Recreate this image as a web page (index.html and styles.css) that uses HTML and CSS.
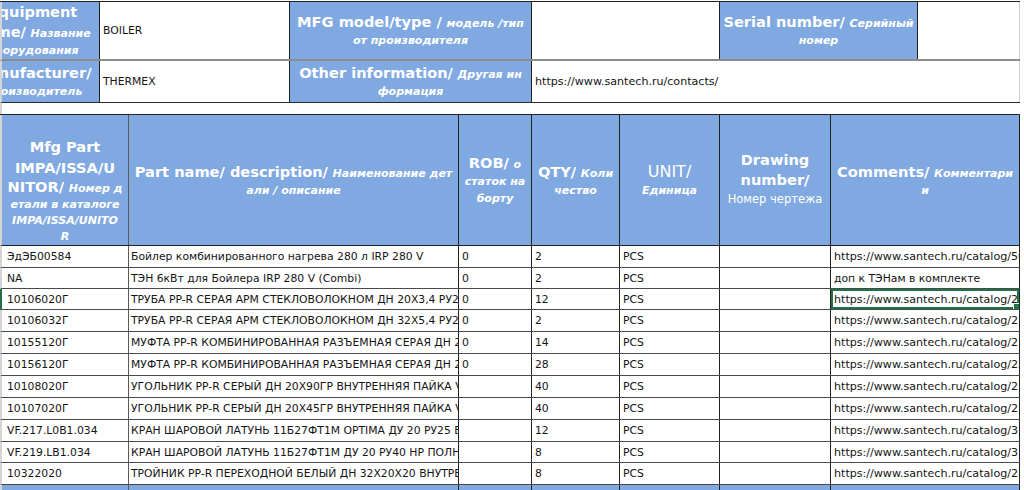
FILE: index.html
```html
<!DOCTYPE html>
<html lang="ru">
<head>
<meta charset="utf-8">
<title>Equipment spare parts</title>
<link rel="stylesheet" href="styles.css">
</head>
<body>
<div class="sheet">
  <div class="info">
    <div class="irow irow1">
      <div class="cell blue clipl"><div class="shift">
        <div class="ln"><span class="b">Equipment</span></div>
        <div class="ln"><span class="b">name/</span> <span class="i">Название</span></div>
        <div class="ln it l17"><span class="i">оборудования</span></div>
      </div></div>
      <div class="cell val">BOILER</div>
      <div class="cell blue"><div>
        <div class="ln l19"><span class="b">MFG model/type /</span> <span class="i">модель /тип</span></div>
        <div class="ln it l19"><span class="i">от производителя</span></div>
      </div></div>
      <div class="cell val"></div>
      <div class="cell blue"><div>
        <div class="ln l19"><span class="b">Serial number/</span> <span class="i">Серийный</span></div>
        <div class="ln it l19"><span class="i">номер</span></div>
      </div></div>
      <div class="cell val last"></div>
    </div>
    <div class="irow irow2">
      <div class="cell blue clipl"><div class="shift">
        <div class="ln"><span class="b">Manufacturer/</span></div>
        <div class="ln it l17"><span class="i">Производитель</span></div>
      </div></div>
      <div class="cell val">THERMEX</div>
      <div class="cell blue"><div>
        <div class="ln"><span class="b">Other information/</span> <span class="i">Другая ин</span></div>
        <div class="ln it l17"><span class="i">формация</span></div>
      </div></div>
      <div class="cell val url last">https://www.santech.ru/contacts/</div>
    </div>
  </div>
  <div class="spacer"></div>
  <div class="tbl">
    <div class="trow thead">
      <div class="cell blue bot"><div>
        <div class="ln l22"><span class="b">Mfg Part</span></div>
        <div class="ln l19"><span class="b">IMPA/ISSA/U</span></div>
        <div class="ln l19"><span class="b">NITOR/</span> <span class="i">Номер д</span></div>
        <div class="ln it l17"><span class="i">етали в каталоге</span></div>
        <div class="ln it l16"><span class="i">IMPA/ISSA/UNITO</span></div>
        <div class="ln it l16"><span class="i">R</span></div>
      </div></div>
      <div class="cell blue"><div>
        <div class="ln"><span class="b">Part name/ description/</span> <span class="i">Наименование дет</span></div>
        <div class="ln it l17"><span class="i">али / описание</span></div>
      </div></div>
      <div class="cell blue"><div>
        <div class="ln"><span class="b">ROB/</span> <span class="i">о</span></div>
        <div class="ln it l17"><span class="i">статок на</span></div>
        <div class="ln it l17"><span class="i">борту</span></div>
      </div></div>
      <div class="cell blue"><div>
        <div class="ln"><span class="b">QTY/</span> <span class="i">Коли</span></div>
        <div class="ln it l17"><span class="i">чество</span></div>
      </div></div>
      <div class="cell blue"><div>
        <div class="ln"><span class="r">UNIT/</span></div>
        <div class="ln it l17"><span class="i">Единица</span></div>
      </div></div>
      <div class="cell blue"><div>
        <div class="ln"><span class="b">Drawing</span></div>
        <div class="ln"><span class="b">number/</span></div>
        <div class="ln it"><span class="n">Номер чертежа</span></div>
      </div></div>
      <div class="cell blue"><div>
        <div class="ln"><span class="b">Comments/</span> <span class="i">Комментари</span></div>
        <div class="ln it l17"><span class="i">и</span></div>
      </div></div>
    </div>

    <div class="trow h22">
      <div class="cell val">ЭдЭБ00584</div>
      <div class="cell val desc">Бойлер комбинированного нагрева 280 л IRP 280 V</div>
      <div class="cell val">0</div>
      <div class="cell val">2</div>
      <div class="cell val">PCS</div>
      <div class="cell val"></div>
      <div class="cell val url">https://www.santech.ru/catalog/50/</div>
    </div>
    <div class="trow h21">
      <div class="cell val">NA</div>
      <div class="cell val desc">ТЭН 6кВт для Бойлера IRP 280 V (Combi)</div>
      <div class="cell val">0</div>
      <div class="cell val">2</div>
      <div class="cell val">PCS</div>
      <div class="cell val"></div>
      <div class="cell val">доп к ТЭНам в комплекте</div>
    </div>
    <div class="trow h21 cur">
      <div class="cell val">10106020Г</div>
      <div class="cell val desc">ТРУБА PP-R СЕРАЯ АРМ СТЕКЛОВОЛОКНОМ ДН 20Х3,4 РУ20</div>
      <div class="cell val">0</div>
      <div class="cell val">12</div>
      <div class="cell val">PCS</div>
      <div class="cell val"></div>
      <div class="cell val url sel">https://www.santech.ru/catalog/25/</div>
    </div>
    <div class="trow h22">
      <div class="cell val">10106032Г</div>
      <div class="cell val desc">ТРУБА PP-R СЕРАЯ АРМ СТЕКЛОВОЛОКНОМ ДН 32Х5,4 РУ20</div>
      <div class="cell val">0</div>
      <div class="cell val">2</div>
      <div class="cell val">PCS</div>
      <div class="cell val"></div>
      <div class="cell val url">https://www.santech.ru/catalog/25/</div>
    </div>
    <div class="trow h22">
      <div class="cell val">10155120Г</div>
      <div class="cell val desc">МУФТА PP-R КОМБИНИРОВАННАЯ РАЗЪЕМНАЯ СЕРАЯ ДН 20</div>
      <div class="cell val">0</div>
      <div class="cell val">14</div>
      <div class="cell val">PCS</div>
      <div class="cell val"></div>
      <div class="cell val url">https://www.santech.ru/catalog/25/</div>
    </div>
    <div class="trow h22">
      <div class="cell val">10156120Г</div>
      <div class="cell val desc">МУФТА PP-R КОМБИНИРОВАННАЯ РАЗЪЕМНАЯ СЕРАЯ ДН 20</div>
      <div class="cell val">0</div>
      <div class="cell val">28</div>
      <div class="cell val">PCS</div>
      <div class="cell val"></div>
      <div class="cell val url">https://www.santech.ru/catalog/25/</div>
    </div>
    <div class="trow h22">
      <div class="cell val">10108020Г</div>
      <div class="cell val desc">УГОЛЬНИК PP-R СЕРЫЙ ДН 20Х90ГР ВНУТРЕННЯЯ ПАЙКА VALTEC</div>
      <div class="cell val"></div>
      <div class="cell val">40</div>
      <div class="cell val">PCS</div>
      <div class="cell val"></div>
      <div class="cell val url">https://www.santech.ru/catalog/25/</div>
    </div>
    <div class="trow h22">
      <div class="cell val">10107020Г</div>
      <div class="cell val desc">УГОЛЬНИК PP-R СЕРЫЙ ДН 20Х45ГР ВНУТРЕННЯЯ ПАЙКА VALTEC</div>
      <div class="cell val"></div>
      <div class="cell val">40</div>
      <div class="cell val">PCS</div>
      <div class="cell val"></div>
      <div class="cell val url">https://www.santech.ru/catalog/25/</div>
    </div>
    <div class="trow h22">
      <div class="cell val">VF.217.L0B1.034</div>
      <div class="cell val desc">КРАН ШАРОВОЙ ЛАТУНЬ 11Б27ФТ1М OPTIMA ДУ 20 РУ25 ВР</div>
      <div class="cell val"></div>
      <div class="cell val">12</div>
      <div class="cell val">PCS</div>
      <div class="cell val"></div>
      <div class="cell val url">https://www.santech.ru/catalog/31/</div>
    </div>
    <div class="trow h21">
      <div class="cell val">VF.219.LB1.034</div>
      <div class="cell val desc">КРАН ШАРОВОЙ ЛАТУНЬ 11Б27ФТ1М ДУ 20 РУ40 НР ПОЛНОПРОХОДНОЙ</div>
      <div class="cell val"></div>
      <div class="cell val">8</div>
      <div class="cell val">PCS</div>
      <div class="cell val"></div>
      <div class="cell val url">https://www.santech.ru/catalog/31/</div>
    </div>
    <div class="trow h22">
      <div class="cell val">10322020</div>
      <div class="cell val desc">ТРОЙНИК PP-R ПЕРЕХОДНОЙ БЕЛЫЙ ДН 32Х20Х20 ВНУТРЕННЯЯ ПАЙКА</div>
      <div class="cell val"></div>
      <div class="cell val">8</div>
      <div class="cell val">PCS</div>
      <div class="cell val"></div>
      <div class="cell val url">https://www.santech.ru/catalog/25/</div>
    </div>
    <div class="trow tfoot">
      <div class="cell blue"></div>
      <div class="cell blue"></div>
      <div class="cell blue"></div>
      <div class="cell blue"></div>
      <div class="cell blue"></div>
      <div class="cell blue"></div>
      <div class="cell blue"></div>
    </div>
  </div>
</div>
</body>
</html>
```

FILE: styles.css
```css
* { box-sizing: border-box; }
html, body { margin: 0; padding: 0; height: 100%; overflow: hidden; background: #fff; }
body { font-family: "DejaVu Sans", "Noto Sans", sans-serif; color: #141414; }

.sheet { padding-top: 1px; width: 1024px; }

.info { border-top: 1px solid #222; width: 1020px; }
.irow { display: grid; border-left: 2px solid #d4d4d4; }
.irow1 {
  grid-template-columns: 98px 190px 242px 188px 198px 102px;
  height: 59px;
  border-bottom: 2px solid #8c8c8c;
}
.irow2 {
  grid-template-columns: 98px 190px 242px 488px;
  height: 42px;
  border-bottom: 1px solid #2a2a2a;
}

.cell {
  border-right: 1px solid #222;
  overflow: hidden;
  display: flex;
  align-items: center;
  min-width: 0;
  white-space: nowrap;
}
.cell.last { border-right-color: #cfcfcf; }

.blue {
  background: #81a9e1;
  color: #fff;
  justify-content: center;
  text-align: center;
}
.clipl { justify-content: flex-end; }
.shift { width: 132px; flex: none; text-align: center; }
.bot { align-items: flex-end; }

.val { padding-left: 3px; font-size: 10.8px; }
.trow .val:first-child { padding-left: 5px; }
.val.desc { padding-left: 2px; }
.val.url { font-size: 11.1px; }

/* line strut: bold-size for lines with bold text, small for italic-only lines */
.ln { line-height: 20px; font-size: 14.6px; }
.ln.it { font-size: 11px; }
.ln.l22 { line-height: 22px; }
.ln.l19 { line-height: 19px; }
.ln.l17 { line-height: 17px; }
.ln.l16 { line-height: 16px; }
.b, .i, .r, .n { line-height: 1; }
.b { font-weight: bold; font-size: 14.6px; }
.i { font-weight: bold; font-style: italic; font-size: 11px; }
.r { font-size: 16px; }
.n { font-size: 11.5px; }

.spacer { height: 11px; border-left: 2px solid #d4d4d4; }

.tbl { border-top: 1px solid #222; width: 1020px; }
.trow {
  display: grid;
  grid-template-columns: 127px 330px 73px 88px 100px 111px 189px;
  border-left: 2px solid #d4d4d4;
  border-bottom: 1px solid #4a4a4a;
}
.trow .cell:first-child { border-right-color: #5a5a5a; }
.thead { height: 131px; border-bottom-color: #222; }
.h22 { height: 22px; }
.h21 { height: 21px; }
.trow.cur { border-left-color: #217346; }
.tfoot { height: 12px; border-bottom: none; }

.sel { position: relative; }
.sel::before {
  content: "";
  position: absolute;
  left: 0; top: 0; right: 0; bottom: 0;
  border: 2px solid #217346;
  pointer-events: none;
}
.sel::after {
  content: "";
  position: absolute;
  right: 0; bottom: 0;
  width: 5px; height: 5px;
  background: #217346;
  border-left: 1px solid #fff;
  border-top: 1px solid #fff;
}
```
